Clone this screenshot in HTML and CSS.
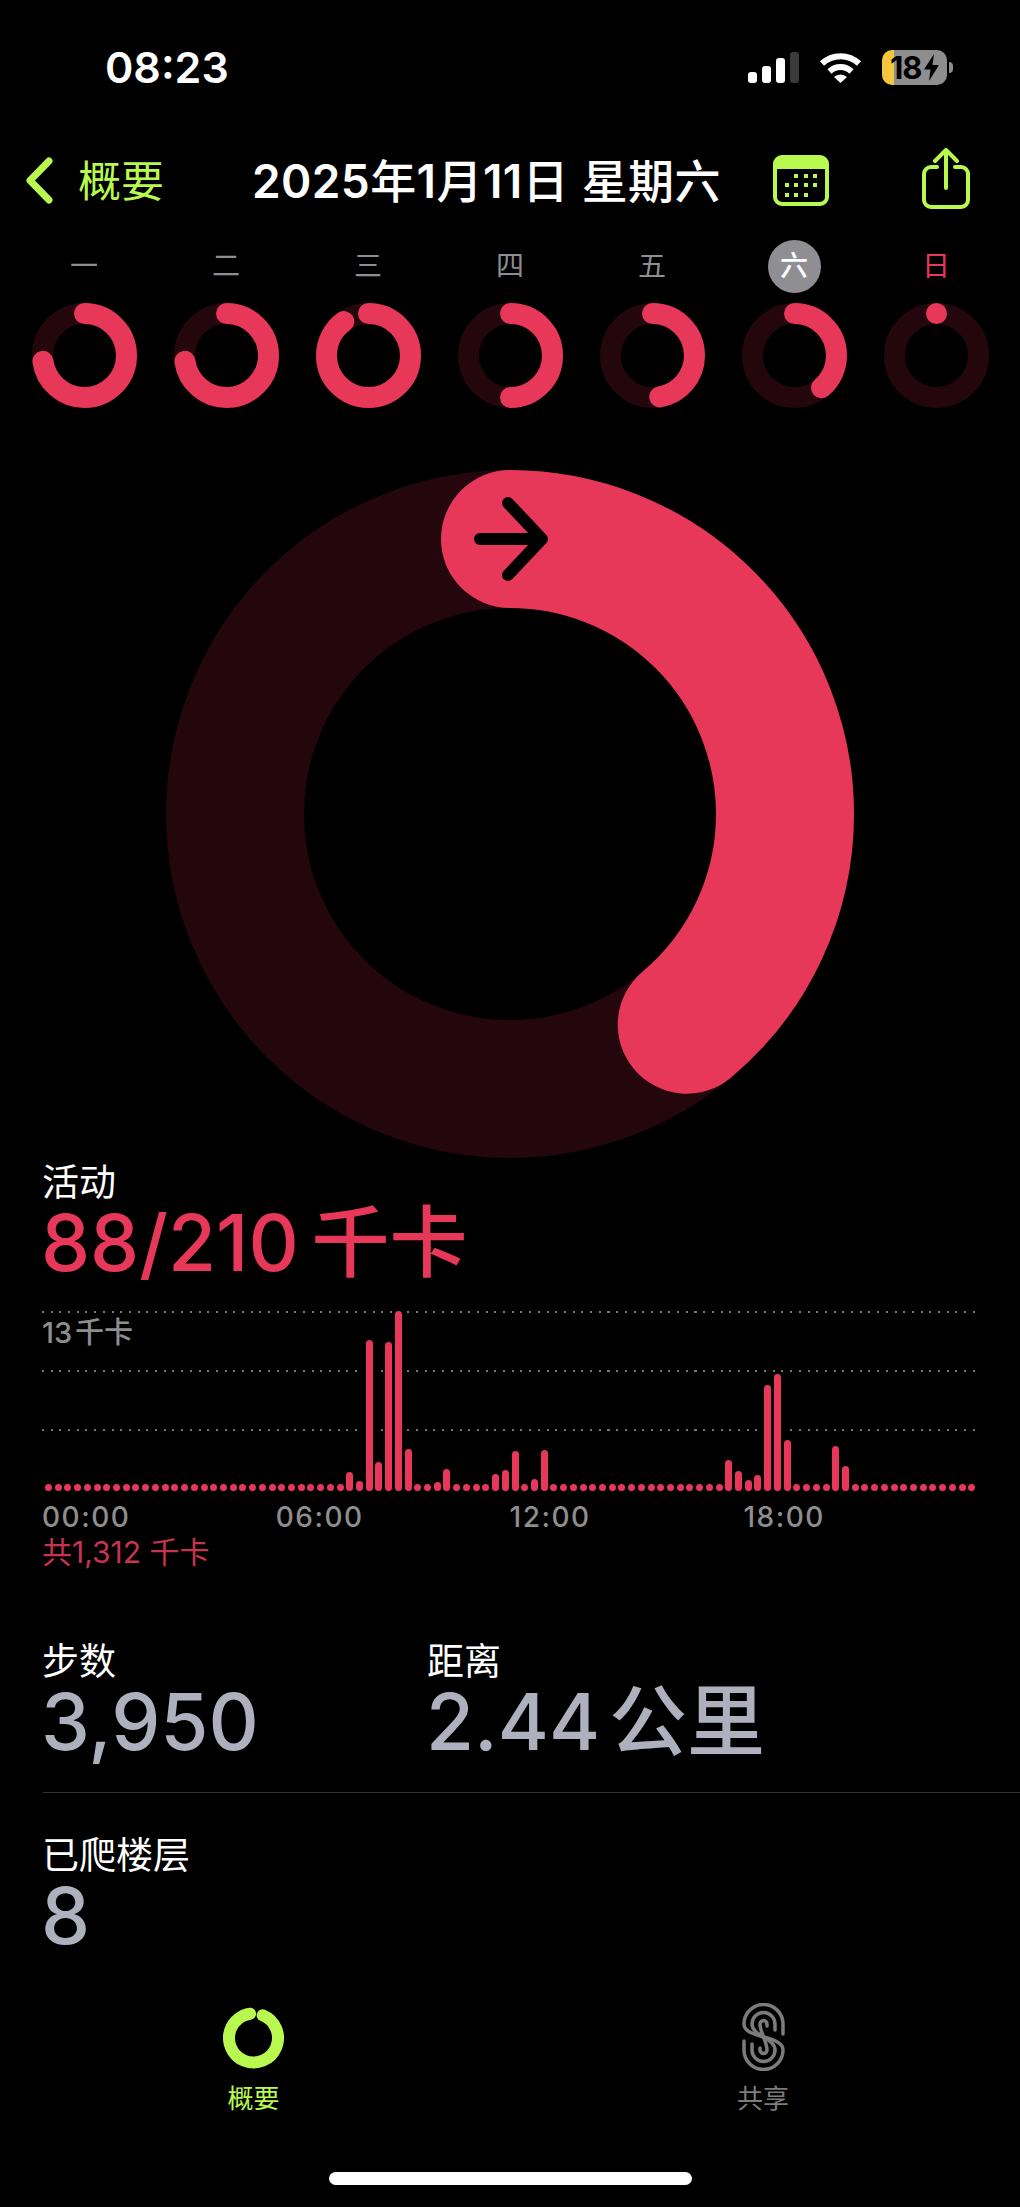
FILE: index.html
```html
<!DOCTYPE html>
<html lang="zh-CN">
<head>
    <meta charset="UTF-8">
    <meta name="viewport" content="width=device-width, initial-scale=1.0">
    <title>活动 2025年1月11日</title>
    <link rel="stylesheet" href="styles.css">
</head>
<body>
    <header class="status">
        <span class="clock">08:23</span>
        <div class="status-icons">
            <div class="signal">
                <span class="sig sig-1"></span>
                <span class="sig sig-2"></span>
                <span class="sig sig-3"></span>
                <span class="sig sig-4"></span>
            </div>
            <svg class="wifi" viewBox="0 0 43 31">
                <path d="M3 11.5A27 27 0 0 1 40 11.5" fill="none" stroke="#fff" stroke-width="6"/>
                <path d="M10.5 19.5A16 16 0 0 1 32.500 19.500" fill="none" stroke="#fff" stroke-width="6"/>
                <path d="M15 25A9.500 9.500 0 0 1 28 25L21.500 31Z" fill="#fff"/>
            </svg>
            <div class="battery">
                <span class="battery-num">18</span>
                <svg class="bolt" viewBox="0 0 15 27"><path d="M10 0L0 15.500H6.500L5 27L15 11H8.500Z"/></svg>
            </div>
        </div>
    </header>

    <nav class="topbar">
        <svg class="chevron" viewBox="0 0 28 47"><path d="M24 4L5 23.500L24 43" fill="none" stroke="#b9f94f" stroke-width="7" stroke-linecap="round" stroke-linejoin="round"/></svg>
        <span class="back-label">概要</span>
        <h1 class="date"><b>2025</b>年<b>1</b>月<b>11</b>日 星期六</h1>
        <svg class="calendar" viewBox="0 0 56 51">
            <rect x="2" y="2" width="52" height="47" rx="7" fill="none" stroke="#b9f94f" stroke-width="4"/>
            <path d="M2 14V9a7 7 0 0 1 7-7H47a7 7 0 0 1 7 7V14Z" fill="#b9f94f"/>
            <g fill="#b9f94f">
                <rect x="21" y="19" width="4" height="4"/><rect x="31" y="19" width="4" height="4"/><rect x="40" y="19" width="4" height="4"/>
                <rect x="12" y="28" width="4" height="4"/><rect x="21" y="28" width="4" height="4"/><rect x="31" y="28" width="4" height="4"/><rect x="40" y="28" width="4" height="4"/>
                <rect x="12" y="38" width="4" height="4"/><rect x="21" y="38" width="4" height="4"/><rect x="31" y="38" width="4" height="4"/>
            </g>
        </svg>
        <svg class="share" viewBox="0 0 48 61">
            <path d="M15 19H9a7 7 0 0 0-7 7V52a7 7 0 0 0 7 7H39a7 7 0 0 0 7-7V26a7 7 0 0 0-7-7H33" fill="none" stroke="#b9f94f" stroke-width="4" stroke-linecap="round"/>
            <path d="M24 40V3M13 13L24 2L35 13" fill="none" stroke="#b9f94f" stroke-width="4" stroke-linecap="round" stroke-linejoin="round"/>
        </svg>
    </nav>

    <section class="week">
        <div class="day"><span class="day-name">一</span>
            <svg class="ring-small" viewBox="0 0 105 105"><circle class="track" cx="52.500" cy="52.500" r="42"/><circle class="progress" cx="52.500" cy="52.500" r="42" pathLength="360" stroke-dasharray="262 360"/></svg></div>
        <div class="day"><span class="day-name">二</span>
            <svg class="ring-small" viewBox="0 0 105 105"><circle class="track" cx="52.500" cy="52.500" r="42"/><circle class="progress" cx="52.500" cy="52.500" r="42" pathLength="360" stroke-dasharray="262 360"/></svg></div>
        <div class="day"><span class="day-name">三</span>
            <svg class="ring-small" viewBox="0 0 105 105"><circle class="track" cx="52.500" cy="52.500" r="42"/><circle class="progress" cx="52.500" cy="52.500" r="42" pathLength="360" stroke-dasharray="324 360"/></svg></div>
        <div class="day"><span class="day-name">四</span>
            <svg class="ring-small" viewBox="0 0 105 105"><circle class="track" cx="52.500" cy="52.500" r="42"/><circle class="progress" cx="52.500" cy="52.500" r="42" pathLength="360" stroke-dasharray="180 360"/></svg></div>
        <div class="day"><span class="day-name">五</span>
            <svg class="ring-small" viewBox="0 0 105 105"><circle class="track" cx="52.500" cy="52.500" r="42"/><circle class="progress" cx="52.500" cy="52.500" r="42" pathLength="360" stroke-dasharray="170 360"/></svg></div>
        <div class="day"><span class="day-name day-today">六</span>
            <svg class="ring-small" viewBox="0 0 105 105"><circle class="track" cx="52.500" cy="52.500" r="42"/><circle class="progress" cx="52.500" cy="52.500" r="42" pathLength="360" stroke-dasharray="140 360"/></svg></div>
        <div class="day"><span class="day-name day-sun">日</span>
            <svg class="ring-small" viewBox="0 0 105 105"><circle class="track" cx="52.500" cy="52.500" r="42"/><circle class="progress" cx="52.500" cy="52.500" r="42" pathLength="360" stroke-dasharray="0.010 360"/></svg></div>
    </section>

    <div class="big-ring">
        <svg viewBox="0 0 688 688" width="688" height="688">
            <circle class="track track-big" cx="344" cy="344" r="275"/>
            <circle class="progress track-big" cx="344" cy="344" r="275" pathLength="360" stroke-dasharray="140 360"/>
            <path d="M314 69H376M342 33L376 69L342 105" fill="none" stroke="#000" stroke-width="12" stroke-linecap="round" stroke-linejoin="round"/>
        </svg>
    </div>

    <section class="activity">
        <div class="label">活动</div>
        <div class="value value-red">88/210 <span class="unit">千卡</span></div>

        <div class="chart">
            <div class="grid-row"><span class="chart-max">13 千卡</span></div>
            <div class="grid-row"></div>
            <div class="grid-row"></div>
            <div class="bars">
                <span class="bar"></span><span class="bar"></span><span class="bar"></span><span class="bar"></span><span class="bar"></span><span class="bar"></span><span class="bar"></span><span class="bar"></span>
                <span class="bar"></span><span class="bar"></span><span class="bar"></span><span class="bar"></span><span class="bar"></span><span class="bar"></span><span class="bar"></span><span class="bar"></span>
                <span class="bar"></span><span class="bar"></span><span class="bar"></span><span class="bar"></span><span class="bar"></span><span class="bar"></span><span class="bar"></span><span class="bar"></span>
                <span class="bar"></span><span class="bar"></span><span class="bar"></span><span class="bar"></span><span class="bar"></span><span class="bar"></span><span class="bar"></span>
                <span class="bar" style="height:19px"></span><span class="bar" style="height:10px"></span><span class="bar" style="height:151px"></span><span class="bar" style="height:29px"></span><span class="bar" style="height:149px"></span><span class="bar" style="height:180px"></span><span class="bar" style="height:42px"></span>
                <span class="bar"></span><span class="bar"></span>
                <span class="bar" style="height:9px"></span><span class="bar" style="height:22px"></span>
                <span class="bar"></span><span class="bar"></span><span class="bar"></span><span class="bar"></span>
                <span class="bar" style="height:17px"></span><span class="bar" style="height:21px"></span><span class="bar" style="height:40px"></span>
                <span class="bar"></span>
                <span class="bar" style="height:12px"></span><span class="bar" style="height:41px"></span>
                <span class="bar"></span><span class="bar"></span><span class="bar"></span><span class="bar"></span><span class="bar"></span><span class="bar"></span><span class="bar"></span><span class="bar"></span><span class="bar"></span>
                <span class="bar"></span><span class="bar"></span><span class="bar"></span><span class="bar"></span><span class="bar"></span><span class="bar"></span><span class="bar"></span><span class="bar"></span><span class="bar"></span>
                <span class="bar" style="height:31px"></span><span class="bar" style="height:20px"></span><span class="bar" style="height:11px"></span><span class="bar" style="height:16px"></span><span class="bar" style="height:106px"></span><span class="bar" style="height:117px"></span><span class="bar" style="height:51px"></span>
                <span class="bar"></span><span class="bar"></span><span class="bar"></span><span class="bar"></span>
                <span class="bar" style="height:45px"></span><span class="bar" style="height:25px"></span>
                <span class="bar"></span><span class="bar"></span><span class="bar"></span><span class="bar"></span><span class="bar"></span><span class="bar"></span><span class="bar"></span><span class="bar"></span><span class="bar"></span><span class="bar"></span><span class="bar"></span><span class="bar"></span><span class="bar"></span>
            </div>
        </div>

        <div class="axis">
            <span>00:00</span>
            <span>06:00</span>
            <span>12:00</span>
            <span>18:00</span>
        </div>
        <div class="total">共1,312 千卡</div>
    </section>

    <section class="stats">
        <div class="stat">
            <div class="label">步数</div>
            <div class="value value-grey">3,950</div>
        </div>
        <div class="stat">
            <div class="label">距离</div>
            <div class="value value-grey">2.44 <span class="unit">公里</span></div>
        </div>
    </section>

    <section class="floors">
        <div class="label">已爬楼层</div>
        <div class="value value-grey">8</div>
    </section>

    <footer class="tabbar">
        <div class="tab tab-active">
            <svg class="tab-icon" viewBox="0 0 61 61">
                <circle cx="30.500" cy="30.500" r="24.500" fill="none" stroke="#b9f94f" stroke-width="12" stroke-linecap="round" pathLength="360" stroke-dasharray="330 360" transform="rotate(-68 30.500 30.500)"/>
            </svg>
            <span>概要</span>
        </div>
        <div class="tab">
            <svg class="tab-icon" viewBox="0 0 43 68">
                <g fill="none" stroke="#7c7c7c" stroke-width="3.500" stroke-linecap="round">
                    <path d="M41 31V21A19.500 19.500 0 0 0 2 21C2 36 41 32 41 47A19.500 19.500 0 0 1 2 47V38"/>
                    <path d="M33 27V21A11.500 11.500 0 0 0 10 21C10 33 33 35 33 47A11.500 11.500 0 0 1 10 47V41"/>
                    <path d="M25 23V21A3.500 3.500 0 0 0 18 21C18 29 25 39 25 47A3.500 3.500 0 0 1 18 47V45"/>
                </g>
            </svg>
            <span>共享</span>
        </div>
    </footer>
    <div class="home-bar"></div>
</body>
</html>
```

FILE: styles.css
```css
* {
    box-sizing: border-box;
}
body {
    margin: 0;
    width: 1020px;
    height: 2207px;
    overflow: hidden;
    background-color: #000;
    color: #fff;
    font-family: Inter, "Noto Sans CJK SC", sans-serif;
}

/* status bar */
.status {
    height: 134px;
    display: flex;
    justify-content: space-between;
    align-items: center;
    padding: 0 73px 0 105px;
}
.clock {
    font-size: 43px;
    font-weight: 600;
}
.status-icons {
    display: flex;
    align-items: center;
}
.signal {
    display: flex;
    align-items: flex-end;
    gap: 5px;
    height: 31px;
}
.sig {
    width: 9px;
    background-color: #fff;
    border-radius: 3px;
}
.sig-1 { height: 11px; }
.sig-2 { height: 17px; }
.sig-3 { height: 25px; }
.sig-4 { height: 31px; background-color: #3a3a3a; }
.wifi {
    width: 43px;
    height: 31px;
    margin-left: 20px;
}
.battery {
    position: relative;
    width: 65px;
    height: 35px;
    margin-left: 20px;
    display: flex;
    align-items: center;
    padding-left: 8px;
    border-radius: 10px;
    background: linear-gradient(90deg, #f4c63d 12px, #8e8e8e 12px);
    color: #000;
}
.battery::after {
    content: "";
    position: absolute;
    right: -6px;
    top: 12px;
    width: 4px;
    height: 11px;
    border-radius: 0 4px 4px 0;
    background-color: #8e8e8e;
}
.battery-num {
    font-size: 31px;
    font-weight: 700;
    letter-spacing: -1px;
}
.bolt {
    width: 15px;
    height: 27px;
    margin-left: 2px;
}

/* nav */
.topbar {
    height: 92px;
    display: flex;
    align-items: center;
    padding-left: 25px;
}
.chevron {
    width: 28px;
    height: 47px;
}
.back-label {
    margin: 0 0 4px 25px;
    width: 174px;
    font-size: 43px;
    color: #b9f94f;
}
.date {
    margin: 0 0 4px 0;
    width: 521px;
    font-size: 46px;
    font-weight: 500;
    letter-spacing: 0.400px;
    white-space: nowrap;
}
.date b {
    font-weight: 600;
}
.calendar {
    width: 56px;
    height: 51px;
}
.share {
    width: 48px;
    height: 61px;
    margin-left: 93px;
    margin-top: -3px;
}

/* week rings */
.week {
    display: grid;
    grid-template-columns: repeat(7, 142px);
    margin: 14px 0 0 13px;
}
.day {
    display: flex;
    flex-direction: column;
    align-items: center;
    gap: 10px;
}
.day-name {
    width: 53px;
    height: 53px;
    line-height: 53px;
    text-align: center;
    font-size: 28px;
    color: #8e8e93;
}
.day-today {
    border-radius: 50%;
    background-color: #8e8e93;
    color: #fff;
    font-weight: 500;
}
.day-sun {
    color: #e7385a;
}
.ring-small {
    width: 105px;
    height: 105px;
}
.track,
.progress {
    fill: none;
    stroke-width: 21;
}
.track {
    stroke: #24060d;
}
.progress {
    stroke: #e7385a;
    stroke-linecap: round;
    transform: rotate(-90deg);
    transform-origin: center;
}
.track-big {
    stroke-width: 138;
}

/* big ring */
.big-ring {
    display: flex;
    justify-content: center;
    margin-top: 62px;
    height: 688px;
}

/* activity */
.activity {
    padding-top: 5px;
}
.label {
    height: 40px;
    line-height: 40px;
    font-size: 37px;
    margin-left: 42px;
}
.value {
    height: 80px;
    line-height: 80px;
    font-size: 78px;
    font-weight: 500;
    margin-left: 41px;
    white-space: nowrap;
}
.value-red {
    color: #e7385a;
    word-spacing: -8px;
}
.value-grey {
    color: #aeb1bd;
    word-spacing: -12px;
}
.unit {
    font-size: 78px;
    font-weight: 500;
}
.chart {
    position: relative;
    width: 938px;
    height: 180px;
    margin: 28px 0 0 42px;
}
.grid-row {
    height: 59px;
    background: repeating-linear-gradient(90deg, #777 0 2px, transparent 2px 8.700px) top left / 100% 2px no-repeat;
}
.chart-max {
    display: block;
    padding-top: 4px;
    line-height: 36px;
    font-size: 29px;
    font-weight: 500;
    word-spacing: -5px;
    color: #8e8e8e;
}
.bars {
    position: absolute;
    left: 3px;
    bottom: 0;
    display: flex;
    align-items: flex-end;
    gap: 2.720px;
}
.bar {
    flex: none;
    width: 7px;
    height: 7px;
    border-radius: 3.500px;
    background-color: #e7385a;
    box-shadow: 0 0 0 2px #000;
}
.axis {
    display: grid;
    grid-template-columns: repeat(4, 233.800px);
    margin: 11px 0 0 42px;
    height: 30px;
    line-height: 30px;
    font-size: 28px;
    font-weight: 500;
    letter-spacing: 1.500px;
    color: #8e8e8e;
}
.total {
    margin: 4px 0 0 42px;
    height: 32px;
    line-height: 32px;
    font-size: 30px;
    color: #c8334f;
}

/* stats */
.stats {
    display: grid;
    grid-template-columns: 385px 1fr;
    margin: 74px 0 0 0;
    padding-bottom: 30px;
}
.stats::after {
    content: "";
    grid-column: 1 / 3;
    height: 1px;
    margin-left: 43px;
    margin-top: 30px;
    background-color: #333;
}
.floors {
    margin-top: 13px;
}

/* tab bar */
.tabbar {
    display: grid;
    grid-template-columns: 507px 512px;
    margin-top: 47px;
}
.tab {
    display: flex;
    flex-direction: column;
    align-items: center;
    font-size: 26px;
    color: #7c7c7c;
}
.tab-active {
    color: #b9f94f;
}
.tab-icon {
    height: 68px;
    width: 61px;
}
.tab-active .tab-icon {
    height: 68px;
    padding-top: 2px;
}
.tab span {
    margin-top: 13px;
    line-height: 30px;
}
.home-bar {
    width: 363px;
    height: 13px;
    margin: 58px auto 0;
    border-radius: 7px;
    background-color: #fff;
}
```
